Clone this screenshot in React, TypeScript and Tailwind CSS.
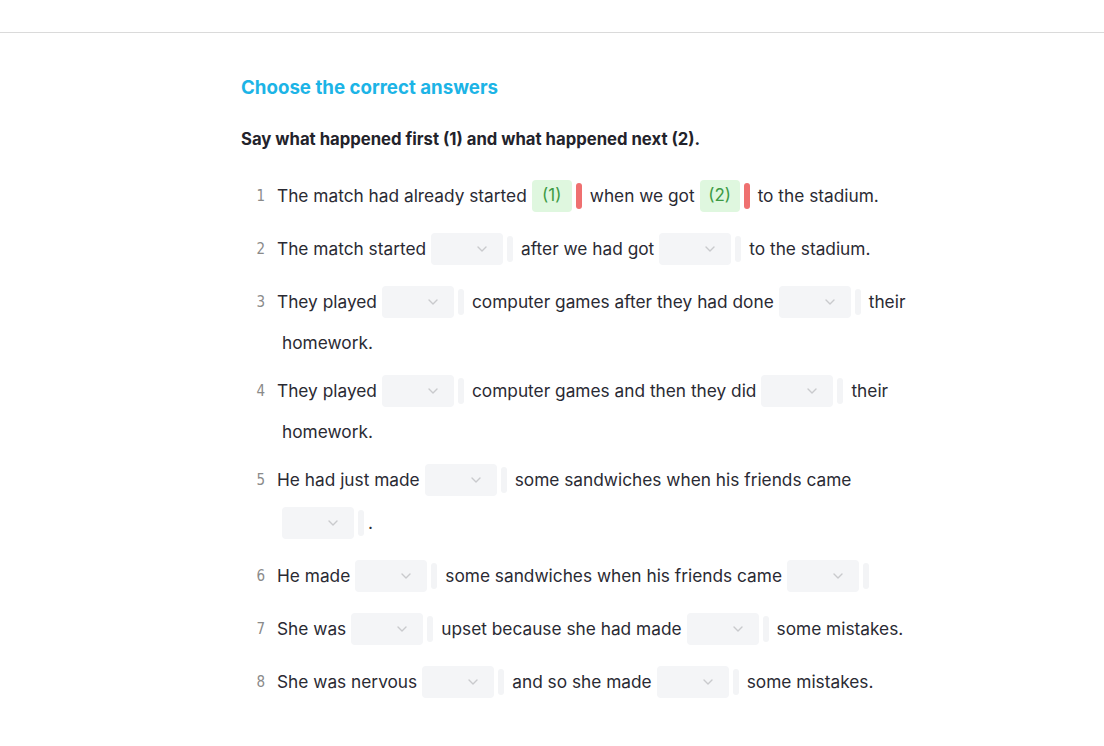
import React from "react";

type Seg = string | { v?: string };
type Line = { segs: Seg[]; indent?: boolean };
type Item = { n: number; lines: Line[] };

const items: Item[] = [
  { n: 1, lines: [{ segs: ["The match had already started", { v: "(1)" }, "when we got", { v: "(2)" }, "to the stadium."] }] },
  { n: 2, lines: [{ segs: ["The match started", {}, "after we had got", {}, "to the stadium."] }] },
  {
    n: 3,
    lines: [
      { segs: ["They played", {}, "computer games after they had done", {}, "their"] },
      { segs: ["homework."], indent: true },
    ],
  },
  {
    n: 4,
    lines: [
      { segs: ["They played", {}, "computer games and then they did", {}, "their"] },
      { segs: ["homework."], indent: true },
    ],
  },
  {
    n: 5,
    lines: [
      { segs: ["He had just made", {}, "some sandwiches when his friends came"] },
      { segs: [{}, "."] },
    ],
  },
  { n: 6, lines: [{ segs: ["He made", {}, "some sandwiches when his friends came", {}] }] },
  { n: 7, lines: [{ segs: ["She was", {}, "upset because she had made", {}, "some mistakes."] }] },
  { n: 8, lines: [{ segs: ["She was nervous", {}, "and so she made", {}, "some mistakes."] }] },
];

function Chevron() {
  return (
    <svg width="10" height="6" viewBox="0 0 10 6" fill="none" className="block">
      <path d="M1 1l4 4 4-4" stroke="#c9cacd" strokeWidth="1.4" strokeLinecap="round" strokeLinejoin="round" />
    </svg>
  );
}

function Dropdown({ v }: { v?: string }) {
  if (v) {
    return (
      <span className="ml-[5px] mr-[8px] flex items-center shrink-0">
        <span className="w-[40px] h-8 rounded-[4px] bg-[#dff7df] flex items-center justify-center text-[#3d9a44] text-[17px]">
          {v}
        </span>
        <span className="ml-[4px] w-[6px] h-[26px] rounded-[3px] bg-[#ef7070]" />
      </span>
    );
  }
  return (
    <span className="ml-[5px] mr-[8px] flex items-center shrink-0">
      <span className="w-[72px] h-8 rounded-[4px] bg-[#f4f5f7] flex items-center justify-end pr-[16px]">
        <Chevron />
      </span>
      <span className="ml-[4px] w-[6px] h-[26px] rounded-[3px] bg-[#f3f4f6]" />
    </span>
  );
}

export default function App() {
  return (
    <div className="min-h-[746px] bg-white" style={{ fontFamily: "Inter, 'Noto Sans', sans-serif" }}>
      <div className="h-[33px] border-b border-[#dadada]" />
      <div className="pl-[241px] pt-[43px]">
        <h1 className="text-[18.7px] font-bold text-[#1cb4e6] leading-[24px]">Choose the correct answers</h1>
        <p className="mt-[28px] text-[16.7px] font-bold text-[#23232b] leading-[22px]">
          Say what happened first (1) and what happened next (2).
        </p>
        <div className="mt-[30px] flex flex-col gap-[21px]">
          {items.map((it) => (
            <div key={it.n} className="flex">
              <div
                className="w-[24px] h-8 flex items-center justify-end text-[15px] text-[#8a8a8a]"
                style={{ fontFamily: "'DejaVu Sans Condensed', 'Liberation Sans Narrow', sans-serif" }}
              >
                {it.n}
              </div>
              <div className="ml-[12px] flex flex-col">
                {it.lines.map((ln, i) => {
                  const hasDd = ln.segs.some((s) => typeof s !== "string");
                  const mt = i === 0 ? "" : hasDd ? "mt-[11px]" : "mt-[14px]";
                  return (
                    <div
                      key={i}
                      className={`flex items-center ${hasDd ? "h-8" : "h-[22px]"} ${mt} ${ln.indent ? "pl-[5px]" : ""}`}
                    >
                      {ln.segs.map((s, j) =>
                        typeof s === "string" ? (
                          <span
                            key={j}
                            className={`text-[17.3px] text-[#2a2a33] whitespace-nowrap ${s === "." ? "-ml-[4px]" : ""}`}
                          >
                            {s}
                          </span>
                        ) : (
                          <Dropdown key={j} v={s.v} />
                        )
                      )}
                    </div>
                  );
                })}
              </div>
            </div>
          ))}
        </div>
      </div>
    </div>
  );
}
